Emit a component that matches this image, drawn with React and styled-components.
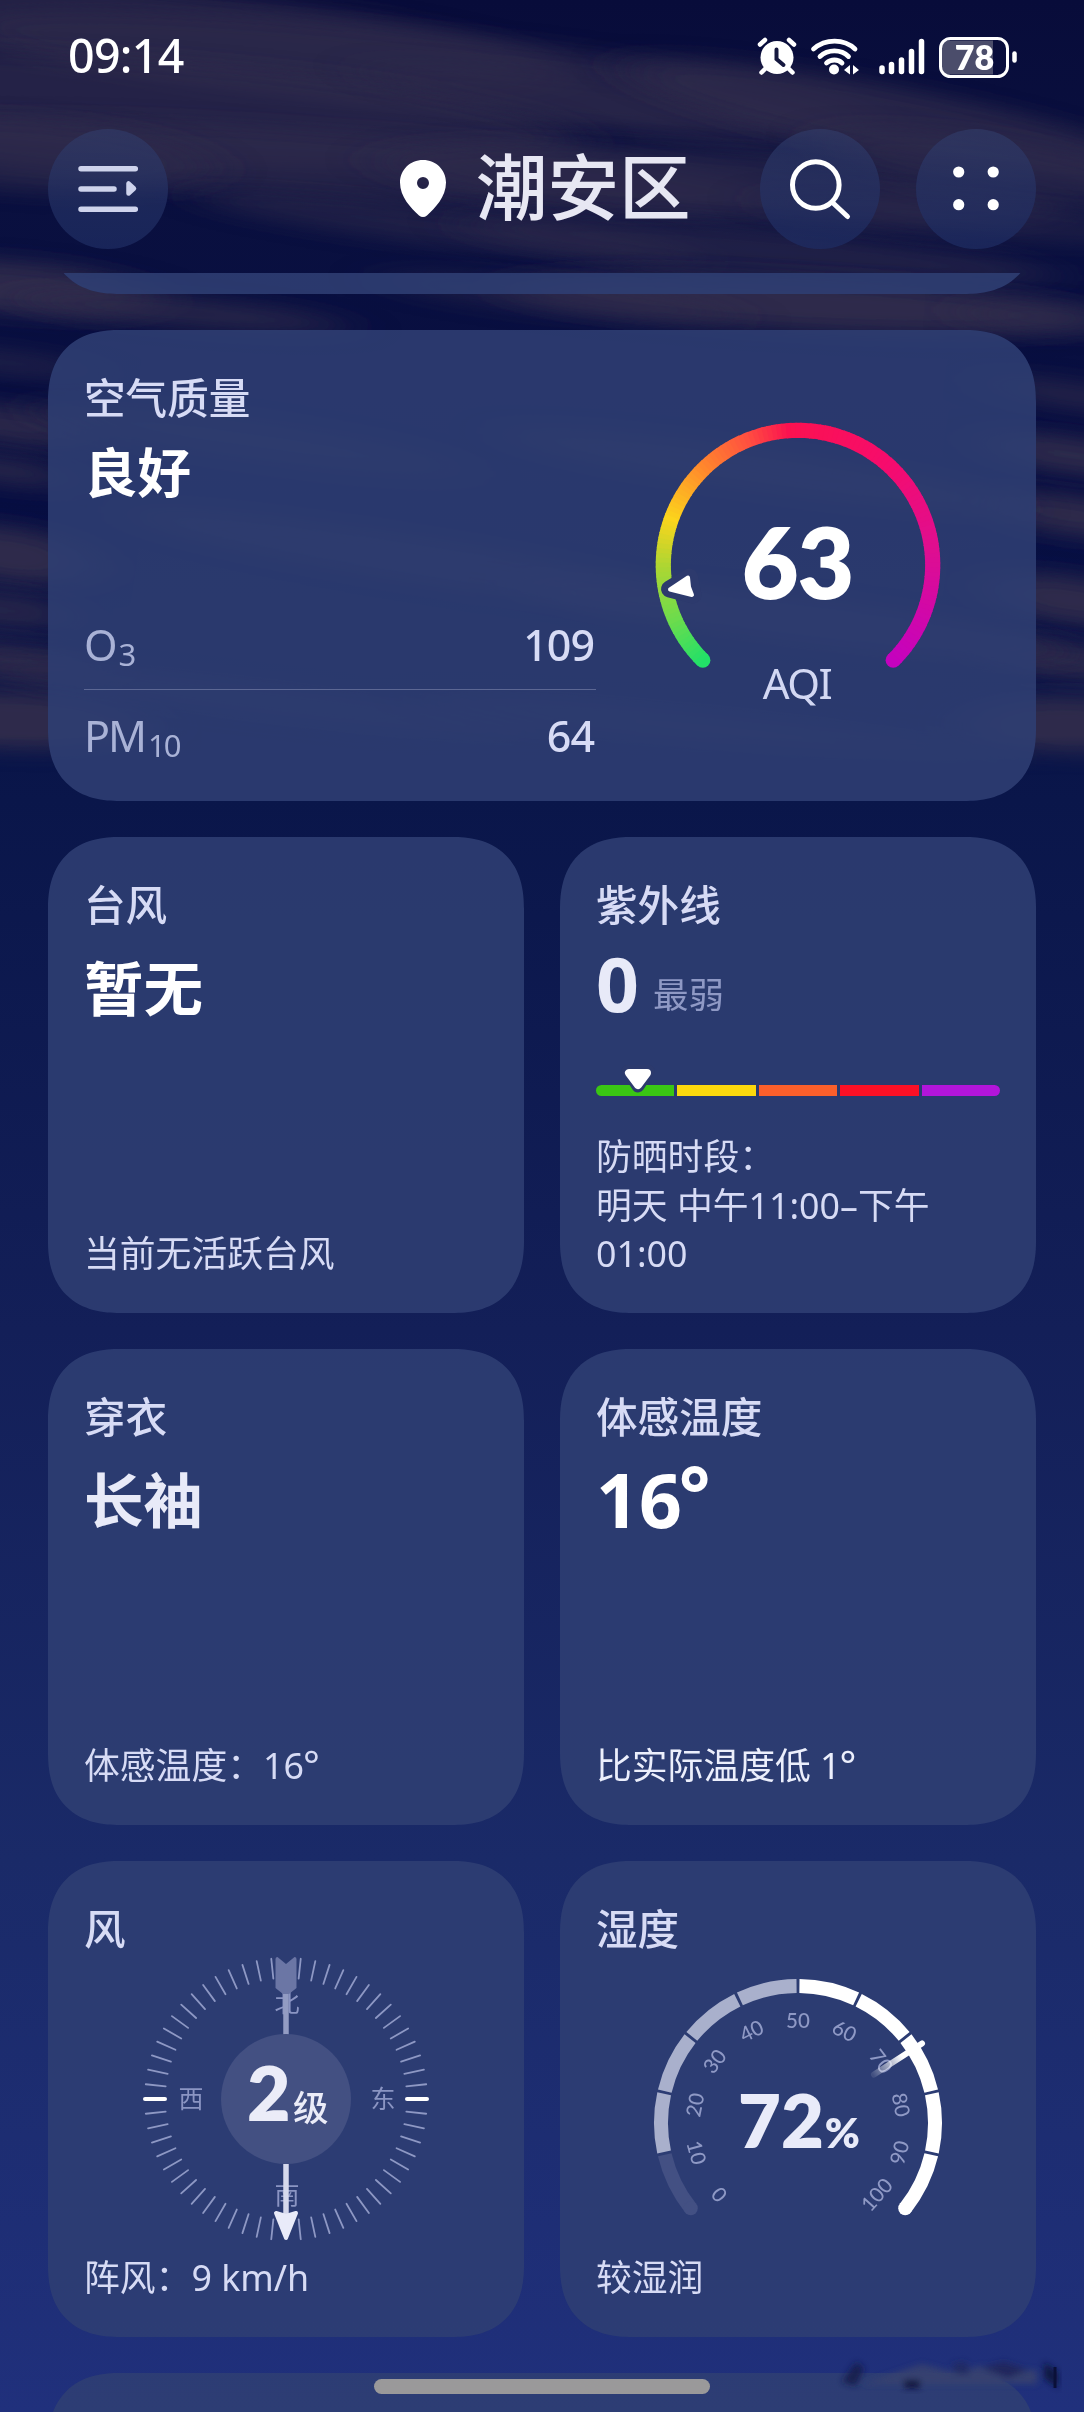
import React from 'react'
import styled, { createGlobalStyle } from 'styled-components'

const GlobalStyle = createGlobalStyle`
  * {
    box-sizing: border-box;
  }

  body {
    margin: 0;
    background: #050b3a;
    color: #d7dbf5;
    font-family: "Noto Sans", "Noto Sans CJK SC", sans-serif;
  }
`

const Screen = styled.div`
  position: relative;
  display: flex;
  flex-direction: column;
  width: 1084px;
  height: 2412px;
  overflow: hidden;
  background: linear-gradient(#080c3a 0, #0a103f 180px, #070e42 500px, #0a164a 800px, #131f58 1330px, #1a2a68 1860px, #20307c 2412px);
`

const Sky = styled.svg`
  position: absolute;
  top: 0;
  left: 0;
`

const StatusBar = styled.div`
  position: relative;
  display: flex;
  align-items: center;
  height: 114px;
  padding: 0 67px 0 68px;
`

const Clock = styled.div`
  flex: 1;
  margin-top: -4px;
  font-size: 46.5px;
  font-weight: 500;
  line-height: 60px;
  letter-spacing: -0.7px;
  color: #fff;
`

const StatusIcons = styled.svg`
  display: block;
`

const Header = styled.div`
  position: relative;
  display: flex;
  align-items: center;
  height: 159px;
  padding: 0 48px 9px;
`

const RoundButton = styled.div`
  display: flex;
  width: 120px;
  height: 120px;
  border-radius: 50%;
  background: linear-gradient(rgba(50, 62, 108, 0.6), rgba(30, 44, 98, 0.75));
`

const Place = styled.div`
  flex: 1;
  display: flex;
  align-items: center;
  padding-left: 231px;
`

const PlaceName = styled.div`
  margin: -5px 0 0 29px;
  font-size: 71.5px;
  font-weight: 500;
  line-height: 90px;
  color: #e7e7f3;
`

const Actions = styled.div`
  display: flex;
  gap: 36px;
`

const Scroll = styled.div`
  position: relative;
  display: flex;
  flex-direction: column;
  flex: 1;
  padding: 0 48px;
  overflow: hidden;
`

const Card = styled.div`
  display: flex;
  flex-direction: column;
  flex-shrink: 0;
  height: ${({ $height }) => $height || 476}px;
  padding: 44px 36px 35px;
  border-radius: 72px;
  corner-shape: superellipse(1.25);
  background: rgba(47, 63, 115, 0.88);
`

const Peek = styled.div`
  display: flex;
  flex-direction: column;
  justify-content: flex-end;
  flex-shrink: 0;
  height: 21px;
  margin-bottom: 36px;
  overflow: hidden;
`

const Grid = styled.div`
  display: grid;
  grid-template-columns: 1fr 1fr;
  gap: 36px;
  margin: 36px 0;
`

const Label = styled.div`
  font-size: 41.6px;
  font-weight: 500;
  line-height: 48px;
`

const Value = styled.div`
  height: 72px;
  margin-top: ${({ $top }) => $top}px;
  font-size: ${({ $size }) => $size}px;
  font-weight: 700;
  line-height: 72px;
  color: ${({ $color }) => $color || '#fff'};
`

const Degree = styled.span`
  position: relative;
  top: -7px;
  left: -3px;
`

const SmallDegree = styled.span`
  position: relative;
  top: 1px;
  left: -1px;
  font-size: 1.1em;
  line-height: 0;
`

const Level = styled.span`
  margin-left: 14px;
  font-size: 35.5px;
  font-weight: 400;
  line-height: 0;
  vertical-align: 4px;
  color: #8f99c5;
`

const Spacer = styled.div`
  flex: 1;
`

const Note = styled.div`
  font-size: 35.8px;
  line-height: 48.5px;
  color: ${({ $bright }) => ($bright ? '#eceffc' : '#d7dbf5')};
`

const AirBody = styled.div`
  display: flex;
  justify-content: space-between;
  padding-right: 52px;
`

const AirInfo = styled.div`
  display: flex;
  flex-direction: column;
  width: 512px;
  height: 405px;
`

const AirRow = styled.div`
  display: flex;
  justify-content: space-between;
  align-items: center;
  height: 90px;
  padding: 2px 2px 0 0;
  font-size: 43px;
  line-height: 60px;

  & + & {
    border-top: 1.5px solid #5c6793;
  }
`

const Pollutant = styled.div`
  letter-spacing: -2px;
  color: #a9b2d6;

  sub {
    margin-left: 3px;
    font-size: 31px;
    line-height: 0;
    vertical-align: -5px;
  }
`

const Reading = styled.div`
  font-weight: 500;
  letter-spacing: -1px;
`

const UvScale = styled.div`
  position: relative;
  display: flex;
  gap: 3px;
  height: 12px;
  margin: 66px 0 36px;
  border-radius: 6px;
`

const UvBand = styled.div`
  flex: 1;
  background: ${({ $color }) => $color};

  &:first-child {
    border-radius: 6px 0 0 6px;
  }

  &:last-of-type {
    border-radius: 0 6px 6px 0;
  }
`

const UvMarker = styled.svg`
  position: absolute;
  top: -20px;
  left: 23px;
`

const Dial = styled.svg`
  display: block;
  flex-shrink: 0;
  align-self: center;
  margin-top: ${({ $top }) => $top || 0}px;
  overflow: visible;
`

const AirDial = styled(Dial)`
  align-self: flex-start;
`

const Numeral = styled.text`
  font-family: Lato, "Noto Sans CJK SC", sans-serif;
  font-weight: ${({ $weight }) => $weight || 700};
`

const HomeBar = styled.div`
  position: absolute;
  left: 374px;
  bottom: 18px;
  width: 336px;
  height: 15px;
  border-radius: 8px;
  background: #9a999a;
`

const Smudge = styled.svg`
  position: absolute;
  right: 22px;
  bottom: 18px;
`

const CLOUDS = [
  // cx, cy, rx, ry, angle, opacity
  [150, 30, 420, 44, 6, 0.7],
  [420, 72, 460, 40, 6, 0.7],
  [120, 110, 460, 52, 4, 0.75],
  [700, 118, 340, 26, 8, 0.4],
  [900, 122, 280, 34, 11, 0.8],
  [330, 165, 460, 34, 4, 0.7],
  [20, 155, 190, 36, 4, 0.65],
  [720, 185, 340, 34, 4, 0.65],
  [1000, 170, 180, 30, 9, 0.6],
  [450, 228, 260, 18, 7, 0.6],
  [760, 250, 300, 22, 5, 0.6],
  [960, 218, 200, 18, 5, 0.5],
  [20, 288, 140, 26, 5, 1],
  [180, 312, 170, 14, 5, 0.8],
  [800, 304, 300, 26, 3, 1],
  [560, 298, 180, 16, 6, 0.5],
  [1050, 318, 90, 14, 4, 0.6],
  [0, 362, 100, 12, 6, 0.6],
  [10, 425, 90, 20, 8, 0.9],
  [0, 470, 80, 14, 8, 0.8],
  [10, 555, 90, 28, 8, 1],
  [0, 610, 80, 18, 6, 0.8],
  [10, 660, 100, 18, 6, 0.9],
  [20, 722, 130, 32, 2, 1],
  [1070, 395, 90, 14, 8, 0.7],
  [1070, 455, 90, 18, 8, 1],
  [1070, 515, 90, 20, 8, 1],
  [1070, 600, 90, 24, 8, 1],
  [1070, 662, 90, 18, 6, 0.9],
  [1070, 728, 110, 32, 2, 1],
  [250, 440, 220, 20, 8, 0.7],
  [420, 560, 300, 22, 9, 0.8],
  [760, 470, 260, 20, 8, 0.8],
  [800, 620, 280, 22, 7, 0.8],
  [260, 700, 300, 16, 7, 0.7],
  [720, 730, 300, 18, 6, 0.7]
]

const UV_COLORS = ['#3ac614', '#fcd80d', '#fb5f2b', '#fb1026', '#b215da']

// degrees clockwise from twelve o'clock
const polar = (cx, cy, r, deg) => {
  const a = (deg * Math.PI) / 180
  return [cx + r * Math.sin(a), cy - r * Math.cos(a)]
}

const arc = (cx, cy, r, from, to) => {
  const [x1, y1] = polar(cx, cy, r, from)
  const [x2, y2] = polar(cx, cy, r, to)
  return `M${x1} ${y1}A${r} ${r} 0 ${to - from > 180 ? 1 : 0} 1 ${x2} ${y2}`
}

const AQI_STOPS = [
  [-135, [34, 224, 104]],
  [-115, [105, 220, 78]],
  [-90, [175, 214, 50]],
  [-70, [252, 212, 28]],
  [-45, [255, 138, 44]],
  [-22, [255, 80, 64]],
  [-4, [251, 18, 80]],
  [40, [246, 12, 108]],
  [85, [222, 14, 146]],
  [135, [196, 2, 190]]
]

const aqiColor = (deg) => {
  let i = 1
  while (i < AQI_STOPS.length - 1 && deg > AQI_STOPS[i][0]) i++
  const [d0, c0] = AQI_STOPS[i - 1]
  const [d1, c1] = AQI_STOPS[i]
  const t = Math.min(1, Math.max(0, (deg - d0) / (d1 - d0)))
  return `rgb(${c0.map((c, k) => Math.round(c + (c1[k] - c) * t)).join(',')})`
}

const range = (n) => Array.from({ length: n }, (_, i) => i)

const Clouds = () => (
  <Sky width="1084" height="800" viewBox="0 0 1084 800">
    <defs>
      <filter id="soft" x="-20%" y="-100%" width="140%" height="300%">
        <feGaussianBlur stdDeviation="28 10" />
      </filter>
      <linearGradient id="fade" x1="0" y1="0" x2="0" y2="1">
        <stop offset="0.92" stopColor="#fff" />
        <stop offset="0.97" stopColor="#000" />
      </linearGradient>
      <mask id="horizon">
        <rect width="1084" height="800" fill="url(#fade)" />
      </mask>
    </defs>
    <g mask="url(#horizon)">
      {CLOUDS.map(([cx, cy, rx, ry, angle, opacity]) => (
        <ellipse
          key={`${cx}-${cy}`}
          cx={cx}
          cy={cy}
          rx={rx}
          ry={ry}
          transform={`rotate(${angle} ${cx} ${cy})`}
          fill="#2f2b4b"
          opacity={opacity}
          filter="url(#soft)"
        />
      ))}
    </g>
  </Sky>
)

const Status = () => (
  <StatusIcons width="260" height="44" viewBox="757 35 260 44" fill="none" stroke="#fff" strokeLinecap="round">
    <circle cx="777" cy="57.5" r="16.5" fill="#fff" stroke="none" />
    <path d="M760 44.5l5-4.5M794 44.5l-5-4.5M765 69l-3.5 3.5M789 69l3.5 3.5" strokeWidth="4.5" />
    <path d="M776.5 49.5v9.5l7 6" stroke="#15183f" strokeWidth="4" />
    <path d="M813.5 49c12-10.500 30.500-10.500 41.500 0M820 56.500c8-7.500 21-7.500 28.500 0M826.500 63c4.500-4 11.500-4 15.500 0" strokeWidth="4.8" />
    <circle cx="834" cy="69.5" r="5" fill="#fff" stroke="none" />
    <path d="M844 70l6-5v9.500zM859 70l-6-5v9.500z" fill="#fff" stroke="none" />
    <path d="M882 68v3.500M891.500 64.500v7M901.500 60v11.500M911.500 51.500v20M921.500 41.500v30" strokeWidth="5.5" />
    <path d="M949 40.500H993V74.500H949a7 7 0 0 1-7-7V47.500a7 7 0 0 1 7-7z" fill="#4b4d6b" stroke="none" />
    <rect x="940.5" y="38.5" width="67" height="38" rx="10" strokeWidth="3" />
    <path d="M1014.500 53.500v7" strokeWidth="4.5" />
    <Numeral x="974.5" y="70" textAnchor="middle" fontSize="34" fill="#fff" stroke="none" $weight={800}>78</Numeral>
  </StatusIcons>
)

const AqiDial = () => (
  <AirDial width="300" height="300" viewBox="648 415 300 300" $top={41}>
    <circle cx={702.8} cy={660.2} r="7.6" fill={aqiColor(-135)} />
    <circle cx={893.2} cy={660.2} r="7.6" fill={aqiColor(135)} />
    {range(135).map((i) => {
      const from = -135 + i * 2
      return (
        <path
          key={i}
          d={arc(798, 565, 134.7, from, Math.min(135, from + 2.4))}
          fill="none"
          stroke={aqiColor(from + 1)}
          strokeWidth="15.2"
        />
      )
    })}
    <path d="M669.5 589l20-12 3.5 18z" fill="#2d3a6d" stroke="#2d3a6d" strokeWidth="17" strokeLinejoin="round" />
    <path d="M670 589.5L688 577.5L689 587L692 595z" fill="#fff" stroke="#fff" strokeWidth="4" strokeLinejoin="round" />
    <Numeral x="797.5" y="598.5" textAnchor="middle" fontSize="98" fill="#fff" letterSpacing="-1" $weight={800}>63</Numeral>
    <text x="797" y="699" textAnchor="middle" fontSize="42" letterSpacing="-1.5" fill="#d3d8f3">AQI</text>
  </AirDial>
)

const WindDial = () => (
  <Dial width="288" height="288" viewBox="-144 -144 288 288" $top={2}>
    {range(60).map((i) => {
      if (i % 30 === 0) return null
      const main = i % 15 === 0
      return (
        <line
          key={i}
          y1="-141"
          y2="-121"
          transform={`rotate(${i * 6})`}
          stroke={main ? '#fff' : '#8e98c4'}
          strokeWidth={main ? 4 : 1.8}
          strokeLinecap="round"
        />
      )
    })}
    <g fontSize="25" fill="#8b95c3" textAnchor="middle">
      <text x="1" y="-87">北</text>
      <text x="1" y="105">南</text>
      <text x="-95" y="8.5">西</text>
      <text x="97" y="8.5">东</text>
    </g>
    <path d="M0-107V-64" stroke="#939cc3" strokeWidth="5.5" />
    <path d="M-10.5-140q0-2 2-2L0-135L8.5-142q2 0 2 2V-111L3-105H-3L-10.5-111z" fill="#6b76a5" />
    <path d="M0 65V118" stroke="#d6d9ec" strokeWidth="5.5" />
    <path d="M-10 114L0 117L10 114L0 139z" fill="#e9ebf9" stroke="#e9ebf9" strokeWidth="4" strokeLinejoin="round" />
    <circle r="65" fill="#435082" />
    <Numeral x="-39" y="22" fontSize="75" fill="#ebecf8" $weight={800}>2</Numeral>
    <text x="7" y="22" fontSize="35.5" fontWeight="500" fill="#ebecf8">级</text>
  </Dial>
)

const STEP = 25.7

const segmentColor = (i) => {
  if (i === 0) return '#435083'
  return i < 5 ? '#a9b0cc' : '#fff'
}

const HumidityDial = () => (
  <Dial width="292" height="276" viewBox="-146 -146 292 276" $top={24}>
    <defs>
      <linearGradient id="needle" gradientUnits="userSpaceOnUse" x1="75" y1="-48" x2="104" y2="-67">
        <stop offset="0" stopColor="#fff" stopOpacity="0.1" />
        <stop offset="1" stopColor="#fff" />
      </linearGradient>
    </defs>
    {range(10).map((i) => {
      const from = (i - 5) * STEP
      return (
        <path
          key={i}
          d={arc(0, 0, 137, from + (i ? 0.6 : 0), from + STEP - (i < 9 ? 0.6 : 0))}
          fill="none"
          stroke={segmentColor(i)}
          strokeWidth="14"
        />
      )
    })}
    {[0, 9].map((i) => {
      const [x, y] = polar(0, 0, 137, i ? 5 * STEP : -5 * STEP)
      return <circle key={i} cx={x} cy={y} r="7" fill={segmentColor(i)} />
    })}
    {range(11).map((i) => {
      const deg = (i - 5) * 26.3
      const [x, y] = polar(0, 0, 105, deg)
      const turn = Math.abs(deg) > 90 ? deg + 180 : deg
      return (
        <Numeral
          key={i}
          y="7.5"
          textAnchor="middle"
          transform={`translate(${x} ${y + 2}) rotate(${turn})`}
          fontSize="20.5"
          fill="#8f99c5"
          $weight={500}
        >
          {i * 10}
        </Numeral>
      )
    })}
    <path d="M76-48.5L124-79.5" stroke="url(#needle)" strokeWidth="6" strokeLinecap="round" />
    <Numeral x="-60" y="24.5" fontSize="74" fill="#e9ebf9" $weight={800}>
      72<tspan fontSize="42" dx="1">%</tspan>
    </Numeral>
  </Dial>
)

const TextCard = ({ label, value, note, size, top, color, bright }) => (
  <Card>
    <Label>{label}</Label>
    <Value $top={top || 23} $size={size || 59.5} $color={color}>{value}</Value>
    <Spacer />
    <Note $bright={bright}>{note}</Note>
  </Card>
)

const App = () => (
  <Screen>
    <GlobalStyle />
    <Clouds />
    <StatusBar>
      <Clock>09:14</Clock>
      <Status />
    </StatusBar>
    <Header>
      <RoundButton>
        <svg width="120" height="120" viewBox="48 129 120 120" fill="none" stroke="#ced3ec" strokeWidth="5.5" strokeLinecap="round">
          <path d="M81 168.800H135.300M81 189H114M81 209.200H135.300" />
          <path d="M128.500 183.500v10l5.500-5z" fill="#ced3ec" strokeWidth="4.5" strokeLinejoin="round" />
        </svg>
      </RoundButton>
      <Place>
        <svg width="48" height="60" viewBox="0 0 48 60">
          <path
            d="M24 1C11 1 1 11 1 23.500C1 38 12 49 20 56.500q4 3 8 0C36 49 47 38 47 23.500C47 11 37 1 24 1zM24 18a6 6 0 1 1 0 12a6 6 0 0 1 0-12z"
            fill="#fff"
            fillRule="evenodd"
          />
        </svg>
        <PlaceName>潮安区</PlaceName>
      </Place>
      <Actions>
        <RoundButton>
          <svg width="120" height="120" viewBox="760 129 120 120" fill="none" stroke="#fff" strokeWidth="5" strokeLinecap="round">
            <circle cx="815.8" cy="185" r="23.3" />
            <path d="M832.500 202.500L847.500 216.500" />
          </svg>
        </RoundButton>
        <RoundButton>
          <svg width="120" height="120" viewBox="916 129 120 120" fill="#fff">
            <circle cx="958.7" cy="172" r="5.6" />
            <circle cx="993.2" cy="172" r="5.6" />
            <circle cx="958.7" cy="204.7" r="5.6" />
            <circle cx="993.2" cy="204.7" r="5.6" />
          </svg>
        </RoundButton>
      </Actions>
    </Header>
    <Scroll>
      <Peek>
        <Card $height={300} />
      </Peek>
      <Card $height={470.5}>
        <AirBody>
          <AirInfo>
            <Label>空气质量</Label>
            <Value $top={15} $size={53.5}>良好</Value>
            <Spacer />
            <AirRow>
              <Pollutant>O<sub>3</sub></Pollutant>
              <Reading>109</Reading>
            </AirRow>
            <AirRow>
              <Pollutant>PM<sub>10</sub></Pollutant>
              <Reading>64</Reading>
            </AirRow>
          </AirInfo>
          <AqiDial />
        </AirBody>
      </Card>
      <Grid>
        <TextCard label="台风" value="暂无" note="当前无活跃台风" />
        <Card>
          <Label>紫外线</Label>
          <Value $top={18} $size={75} $color="#e8eaf8">
            0<Level>最弱</Level>
          </Value>
          <UvScale>
            {UV_COLORS.map((color) => <UvBand key={color} $color={color} />)}
            <UvMarker width="38" height="36" viewBox="0 0 38 36">
              <path d="M9 6H29L19 21z" fill="#2c3a6d" stroke="#2c3a6d" strokeWidth="13" strokeLinejoin="round" />
              <path d="M10 8H28L19 20z" fill="#fff" stroke="#fff" strokeWidth="8" strokeLinejoin="round" />
            </UvMarker>
          </UvScale>
          <Note>防晒时段：</Note>
          <Note>明天 中午11:00–下午01:00</Note>
        </Card>
        <TextCard
          label="穿衣"
          value="长袖"
          note={<>体感温度：16<SmallDegree>°</SmallDegree></>}
          color="#e8eaf8"
        />
        <TextCard
          label="体感温度"
          value={<>16<Degree>°</Degree></>}
          size={75}
          top={22}
          note={<>比实际温度低 1<SmallDegree>°</SmallDegree></>}
          bright
        />
        <Card>
          <Label>风</Label>
          <WindDial />
          <Spacer />
          <Note>阵风：9 km/h</Note>
        </Card>
        <Card>
          <Label>湿度</Label>
          <HumidityDial />
          <Spacer />
          <Note>较湿润</Note>
        </Card>
      </Grid>
      <Card />
    </Scroll>
    <HomeBar />
    <Smudge width="230" height="40" viewBox="0 0 230 40">
      <filter id="smear" x="-20%" y="-50%" width="140%" height="200%">
        <feGaussianBlur stdDeviation="3" />
      </filter>
      <g filter="url(#smear)" opacity="0.9">
        <path d="M10 28L24 8L32 14L24 32z" fill="#141c4c" />
        <path d="M30 30H205V16H170L150 12L120 18L90 10L60 20z" fill="#39426f" />
        <path d="M72 26h16v8H72z" fill="#0b1136" />
        <path d="M150 14l22-6 24 8-20 8z" fill="#20285a" />
        <path d="M120 10l14-2 4 12h-14z" fill="#222b60" />
        <path d="M212 8l14 10v16l-14-10z" fill="#10163c" />
      </g>
      <path d="M223 13V34" stroke="#0a1038" strokeWidth="3" />
    </Smudge>
  </Screen>
)

export default App
